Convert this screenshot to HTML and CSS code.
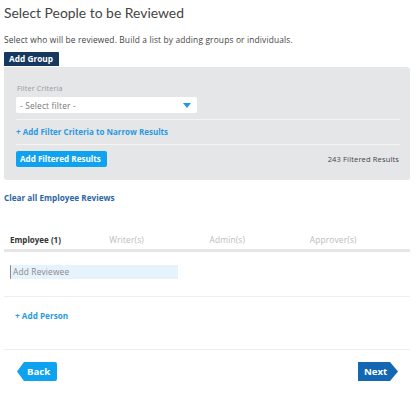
FILE: index.html
```html
<!DOCTYPE html>
<html>
<head>
<meta charset="utf-8">
<link rel="stylesheet" href="styles.css">
</head>
<body>
<div class="page">
  <h1 class="title">Select People to be Reviewed</h1>
  <p class="intro">Select who will be reviewed. Build a list by adding groups or individuals.</p>
  <div class="group-tab">Add Group</div>
  <div class="panel">
    <div class="label">Filter Criteria</div>
    <div class="select">
      <span>- Select filter -</span>
      <svg class="caret" width="8" height="5" viewBox="0 0 8 5"><path d="M0 0H8L4 5Z" fill="#1a9be6"/></svg>
    </div>
    <div class="divider"></div>
    <div class="add-criteria">+ Add Filter Criteria to Narrow Results</div>
    <div class="divider"></div>
    <div class="results-row">
      <div class="btn-filtered">Add Filtered Results</div>
      <div class="count">243 Filtered Results</div>
    </div>
  </div>
  <div class="clear-link">Clear all Employee Reviews</div>
  <div class="tabs">
    <div class="tab active">Employee (1)</div>
    <div class="tab">Writer(s)</div>
    <div class="tab">Admin(s)</div>
    <div class="tab">Approver(s)</div>
  </div>
  <div class="reviewee-row">
    <div class="reviewee">Add Reviewee</div>
  </div>
  <div class="add-person">+ Add Person</div>
  <div class="nav">
    <div class="btn-back">Back</div>
    <div class="btn-next">Next</div>
  </div>
</div>
</body>
</html>
```
FILE: styles.css
```css
* { box-sizing: border-box; }
html, body { margin: 0; padding: 0; background: #fff; }
body { font-family: "Open Sans", Lato, sans-serif; color: #333; }
.page { width: 419px; padding: 0 9px 0 4px; }
.title {
  margin: 0; padding-top: 4px;
  font-family: Lato, "Open Sans", sans-serif;
  font-size: 13.9px; line-height: 18px; font-weight: 400; color: #444;
}
.intro {
  margin: 13px 0 0; font-size: 8.4px; letter-spacing: 0.15px; line-height: 10px; color: #444;
}
.group-tab {
  display: inline-block; margin-top: 5px;
  background: #16375f; color: #fff; font-weight: 700;
  font-size: 8.3px; line-height: 14px; padding: 0 6px 0 5px;
  border-radius: 1px 1px 0 0; height: 14px;
}
.panel {
  background: #e5e6e8; border-radius: 0 3px 3px 3px;
  padding: 17px 10px 12px 12px; height: 113px;
}
.label { font-size: 7.2px; letter-spacing: 0.15px; line-height: 9px; color: #999; padding-left: 1px; }
.select {
  margin-top: 4px; width: 181px; height: 16px; background: #fff;
  border-radius: 2px; display: flex; align-items: center; justify-content: space-between;
  padding: 0 6px 0 4px; font-size: 8.4px; letter-spacing: 0.15px; color: #777;
}
.divider { height: 1px; background: #f4f4f5; margin-top: 6px; }
.add-criteria {
  margin-top: 7px; font-size: 8px; line-height: 10px; font-weight: 700; color: #2a9ae0;
}
.add-criteria + .divider { margin-top: 7px; }
.results-row { display: flex; justify-content: space-between; align-items: center; margin-top: 6px; }
.btn-filtered {
  background: #0ea2ef; color: #fff; font-size: 8.1px; font-weight: 700;
  height: 16px; line-height: 16px; padding: 0 4px; border-radius: 2px; width: 91px;
}
.count { font-size: 7.5px; letter-spacing: 0.15px; color: #444; padding-right: 1px; }
.clear-link {
  margin-top: 13px; font-size: 8.2px; font-weight: 700; color: #2b65a6; line-height: 10px;
}
.tabs {
  display: flex; margin-top: 32px; padding-left: 6px;
  border-bottom: 3px solid #e6e6e6; height: 17px;
}
.tab { width: 103px; font-size: 8.4px; letter-spacing: 0.15px; color: #bbb; line-height: 10px; }
.tab.active { width: 102px; color: #333; font-weight: 700; font-size: 8px; letter-spacing: 0; }
.reviewee-row { padding: 13px 0 17px 6px; border-bottom: 1px solid #eee; }
.reviewee {
  width: 168px; height: 14px; background: #e6f3fd; border-radius: 1px;
  font-size: 8.4px; letter-spacing: 0.15px; line-height: 14px; color: #888; padding-left: 2px;
  border-left: 1px solid #888;
}
.add-person {
  padding: 14px 0 0 11px; height: 53px; border-bottom: 1px solid #eee;
  font-size: 8.2px; font-weight: 700; color: #2a9ae0; line-height: 10px;
}
.nav { display: flex; justify-content: space-between; padding: 12px 12px 0 13px; }
.btn-back, .btn-next {
  height: 19px; line-height: 19px; font-size: 9.6px; font-weight: 700; color: #fff;
  width: 40px;
}
.btn-back {
  background: #0ea2ef; padding-left: 10px;
  clip-path: polygon(7px 0, 100% 0, 100% 100%, 7px 100%, 0 50%);
  border-radius: 0 2px 2px 0;
}
.btn-next {
  background: #1467b3; padding-left: 6px;
  clip-path: polygon(0 0, 32px 0, 100% 50%, 32px 100%, 0 100%);
}
```
